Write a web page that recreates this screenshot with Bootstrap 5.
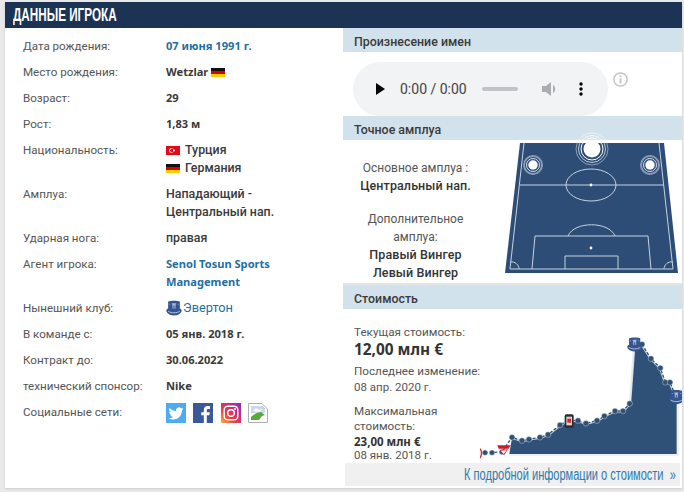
<!DOCTYPE html>
<html lang="ru">
<head>
<meta charset="utf-8">
<title>Данные игрока</title>
<link rel="stylesheet" href="https://cdn.jsdelivr.net/npm/bootstrap@5.3.0/dist/css/bootstrap.min.css">
<style>
html,body{height:100%;overflow:hidden}
body{background:#e9e9e9;font-family:Roboto,"Liberation Sans",sans-serif;font-size:12px;line-height:18px;color:#333}
.shell{position:relative;margin:2px 2px 0 5px;height:486px;background:#fff;box-shadow:0 1px 2px rgba(0,0,0,.12)}
.head-bar{height:26px;background:#1d3353;color:#fff;padding-left:8px;font:700 18px/26px "Liberation Sans",sans-serif}
.head-txt{display:inline-block;transform:scaleX(.65);transform-origin:left;white-space:nowrap}
.info-col{width:338px;flex:none;padding:9px 0 0 18px}
.side-col{width:339px;flex:none}
.info-row{display:flex;padding-bottom:8px}
.info-key{width:143px;flex:none;color:#555;font-size:11.6px}
.info-val{font-family:"Noto Sans",Roboto,sans-serif;font-weight:700;font-size:11.1px;color:#3a3a3a;width:170px}
.info-val a,.club-link{color:#1f6f9f;text-decoration:none}
.plain-line{font-family:Roboto,sans-serif;font-weight:500;font-size:12.4px}
.club-link{font-family:Roboto,sans-serif;font-weight:400;font-size:12.8px}
.crest-ico{flex:none;margin-right:1px}
.flag{display:inline-block;width:14px;height:9px;vertical-align:-1px}
.flag-gap{margin-right:5px}
.bar-title{background:#d2e2ec;height:24px;padding-left:11px;font-weight:500;font-size:12.4px;line-height:28px;color:#3b3b3b;overflow:hidden}
.player-wrap{height:64px;padding:10px 0 0 10px}
.fake-audio{width:255px;height:54px;border-radius:27px;background:#f1f3f4;padding-left:23px;color:#3f4246;font-size:14px}
.audio-time{width:66px;margin:0 16px 0 15px;white-space:nowrap}
.audio-track{width:36px;height:4px;border-radius:2px;background:#c0c3c7;margin-right:24px}
.menu-dots{margin-left:21px}
.info-dot{margin:10px 0 0 5px}
.pitch-area{height:143px}
.pitch-text{width:145px;padding-top:19px;text-align:center;color:#555;flex:none}
.pitch-gap{height:15px}
.strong-line{font-weight:500;font-size:12.5px;color:#333;letter-spacing:.1px}
.pitch-svg{overflow:visible;margin:3px 0 0 17px;display:block}
.sep-line{height:2px;background:#e4e4e4}
.value-area{height:154px;overflow:hidden}
.value-text{width:127px;flex:none;margin-left:11px;padding-top:14px;color:#555;white-space:nowrap;font-size:11.7px}
.wrap-txt{white-space:normal;line-height:15px;margin-top:9px}
.big-money{font-family:"Noto Sans",Roboto,sans-serif;font-weight:700;font-size:15.4px;color:#333;line-height:17px;margin-bottom:5px}
.last-line{line-height:17px}
.mid-money{font-family:"Noto Sans",Roboto,sans-serif;font-weight:700;font-size:11.5px;color:#333;line-height:15px}
.tiny-date{font-size:11.5px;line-height:15px;color:#555}
.end-date{line-height:13px}
.chart-svg{display:block;margin:21px 0 0 -1px;flex:none}
.more-bar{position:absolute;left:340px;bottom:2px;width:335px;height:23px;background:#f0f0f0;text-align:right;padding-right:4px;font:400 16px/23px "Liberation Sans",sans-serif;color:#2d7bab;white-space:nowrap;overflow:hidden}
.more-bar a{color:inherit;text-decoration:none;display:inline-block;transform:scaleX(.69);transform-origin:right}
.social-ico{width:20px;height:20px;display:block}
.gap-seven{margin-left:7px}
.gap-eight{margin-left:8px}
</style>
</head>
<body>
<svg width="0" height="0" class="d-block" aria-hidden="true"><defs>
<symbol id="crest" viewBox="0 0 30 30">
<path d="M4 3c4-2 18-2 22 0v13c3 1 4 3 3 6-2 4-8 7-14 7S3 26 1 22c-1-3 0-5 3-6z" fill="#34558f"/>
<path d="M11 6h8v2h-1v8h-6V8h-1z" fill="#a9b8d4"/>
<path d="M14 11h2v5h-2z" fill="#34558f"/>
<path d="M6 7h2v2H6zM22 7h2v2h-2z" fill="#8fa2c6"/>
<path d="M4 21c6 4 16 4 22 0" fill="none" stroke="#d5dded" stroke-width="1.500"/>
</symbol>
</defs></svg>
<div class="shell">
<div class="head-bar"><span class="head-txt">ДАННЫЕ ИГРОКА</span></div>
<div class="d-flex">
<div class="info-col">
 <div class="info-row"><div class="info-key">Дата рождения:</div><div class="info-val"><a href="#">07 июня 1991 г.</a></div></div>
 <div class="info-row"><div class="info-key">Место рождения:</div><div class="info-val">Wetzlar <svg class="flag" viewBox="0 0 14 9"><rect width="14" height="3" fill="#111"/><rect y="3" width="14" height="3" fill="#d00"/><rect y="6" width="14" height="3" fill="#fc0"/></svg></div></div>
 <div class="info-row"><div class="info-key">Возраст:</div><div class="info-val">29</div></div>
 <div class="info-row"><div class="info-key">Рост:</div><div class="info-val">1,83 м</div></div>
 <div class="info-row"><div class="info-key">Национальность:</div><div class="info-val plain-line">
  <div><svg class="flag flag-gap" viewBox="0 0 14 9"><rect width="14" height="9" fill="#e30a17"/><circle cx="5.3" cy="4.5" r="2.3" fill="#fff"/><circle cx="5.9" cy="4.5" r="1.8" fill="#e30a17"/><circle cx="8" cy="4.5" r=".9" fill="#fff"/></svg>Турция</div>
  <div><svg class="flag flag-gap" viewBox="0 0 14 9"><rect width="14" height="3" fill="#111"/><rect y="3" width="14" height="3" fill="#d00"/><rect y="6" width="14" height="3" fill="#fc0"/></svg>Германия</div>
 </div></div>
 <div class="info-row"><div class="info-key">Амплуа:</div><div class="info-val plain-line">Нападающий -<br>Центральный нап.</div></div>
 <div class="info-row"><div class="info-key">Ударная нога:</div><div class="info-val plain-line">правая</div></div>
 <div class="info-row"><div class="info-key">Агент игрока:</div><div class="info-val"><a href="#">Senol Tosun Sports<br>Management</a></div></div>
 <div class="info-row"><div class="info-key">Нынешний клуб:</div><div class="info-val d-flex align-items-center"><svg width="16" height="16" class="crest-ico"><use href="#crest"/></svg><a class="club-link" href="#">Эвертон</a></div></div>
 <div class="info-row"><div class="info-key">В команде с:</div><div class="info-val">05 янв. 2018 г.</div></div>
 <div class="info-row"><div class="info-key">Контракт до:</div><div class="info-val">30.06.2022</div></div>
 <div class="info-row"><div class="info-key">технический спонсор:</div><div class="info-val">Nike</div></div>
 <div class="info-row"><div class="info-key">Социальные сети:</div><div class="d-flex">
  <svg class="social-ico" viewBox="0 0 20 20"><rect width="20" height="20" fill="#4eabf0"/><path transform="translate(2.5 2.5) scale(.94)" fill="#fff" d="M5.026 15c6.038 0 9.341-5.003 9.341-9.334 0-.14 0-.282-.006-.422A6.685 6.685 0 0 0 16 3.542a6.658 6.658 0 0 1-1.889.518 3.301 3.301 0 0 0 1.447-1.817 6.533 6.533 0 0 1-2.087.793A3.286 3.286 0 0 0 7.875 6.03a9.325 9.325 0 0 1-6.767-3.429 3.289 3.289 0 0 0 1.018 4.382A3.323 3.323 0 0 1 .64 6.575v.045a3.288 3.288 0 0 0 2.632 3.218 3.203 3.203 0 0 1-.865.115 3.23 3.23 0 0 1-.614-.057 3.283 3.283 0 0 0 3.067 2.277A6.588 6.588 0 0 1 .78 13.58a6.32 6.32 0 0 1-.78-.045A9.344 9.344 0 0 0 5.026 15z"/></svg>
  <svg class="social-ico gap-seven" viewBox="0 0 20 20"><rect width="20" height="20" fill="#3b5998"/><path fill="#fff" d="M13.8 20v-7.7h2.6l.4-3h-3V7.4c0-.9.2-1.5 1.5-1.5H17V3.2c-.3 0-1.2-.1-2.3-.1-2.3 0-3.900 1.400-3.900 4v2.200H8.200v3h2.600V20z"/></svg>
  <svg class="social-ico gap-eight" viewBox="0 0 20 20"><defs><linearGradient id="ig" x1="0" y1="1" x2="1" y2="0"><stop offset="0" stop-color="#fdb13a"/><stop offset=".35" stop-color="#e8403f"/><stop offset=".7" stop-color="#c32c8c"/><stop offset="1" stop-color="#7a35b5"/></linearGradient></defs><rect width="20" height="20" fill="url(#ig)"/><rect x="3.2" y="3.2" width="13.6" height="13.6" rx="3.6" fill="none" stroke="#fff" stroke-width="1.4"/><circle cx="10" cy="10" r="3.3" fill="none" stroke="#fff" stroke-width="1.4"/><circle cx="14" cy="6" r=".9" fill="#fff"/></svg>
  <svg class="social-ico gap-seven" viewBox="0 0 20 20"><path d="M.5.5h13.500l5.500 5.500v13.500H.5z" fill="#fff" stroke="#b0b0b0"/><path d="M3 3h10.500v3.500H17V10H3z" fill="#c7d9f3"/><path d="M5 8l3-3 3 2 3-1-2 3z" fill="#fff"/><path d="M3 17v-3c3-3 7-5 10-5l4 3-3 1-3 4z" fill="#58a83b"/><path d="M14 3l3 3h-3z" fill="#ddd" stroke="#b0b0b0" stroke-width=".6"/></svg>
 </div></div>
</div>
<div class="side-col">
 <div class="bar-title">Произнесение имен</div>
 <div class="player-wrap d-flex align-items-start">
  <div class="fake-audio d-flex align-items-center">
   <svg width="9" height="12" viewBox="0 0 9 12"><path d="M0 0l9 6-9 6z" fill="#000"/></svg>
   <span class="audio-time">0:00 / 0:00</span>
   <span class="audio-track"></span>
   <svg width="16" height="14" viewBox="0 0 16 14"><path d="M0 4h4l5-4v14L4 10H0z" fill="#a9acb0"/><path d="M11 3c3 2 3 6 0 8z" fill="#a9acb0"/></svg>
   <svg class="menu-dots" width="4" height="14" viewBox="0 0 4 14"><circle cx="2" cy="2" r="1.7"/><circle cx="2" cy="7" r="1.7"/><circle cx="2" cy="12" r="1.7"/></svg>
  </div>
  <svg class="info-dot" width="15" height="15" viewBox="0 0 15 15"><circle cx="7.5" cy="7.5" r="6.6" fill="none" stroke="#c4c4c4" stroke-width="1.5"/><rect x="6.6" y="6.4" width="1.8" height="5" fill="#c4c4c4"/><rect x="6.6" y="3.4" width="1.8" height="1.8" fill="#c4c4c4"/></svg>
 </div>
 <div class="bar-title">Точное амплуа</div>
 <div class="pitch-area d-flex">
  <div class="pitch-text">
   <div>Основное амплуа :</div><div class="strong-line">Центральный нап.</div>
   <div class="pitch-gap"></div>
   <div class="px-3">Дополнительное амплуа:</div><div class="strong-line">Правый Вингер</div><div class="strong-line">Левый Вингер</div>
  </div>
  <svg class="pitch-svg" width="173" height="130" viewBox="505 143 173 130">
   <path d="M520 143H664L678 273H505z" fill="#2d4d77"/>
   <g fill="none" stroke="#c6d2e0" stroke-width="1">
    <path d="M524 143L510 269H673L659 143"/>
    <path d="M520 185H664"/>
    <ellipse cx="591" cy="185" rx="25" ry="16"/>
    <path d="M532 269L535 236H648L651 269"/>
    <path d="M565 269V256H618V269"/>
    <path d="M568 236C574 221 609 221 615 236"/>
    <path d="M510 262C515 261 519 265 519 269M673 262C668 261 664 265 664 269"/>
   </g>
   <circle cx="591" cy="185" r="1.4" fill="#fff"/><circle cx="591" cy="248" r="1.4" fill="#fff"/>
   <g fill="none" stroke="#fff">
    <circle cx="592" cy="149" r="16" stroke-opacity=".45"/><circle cx="592" cy="149" r="13.5" stroke-opacity=".7"/><circle cx="592" cy="149" r="11"/>
    <circle cx="533" cy="165" r="9" stroke-opacity=".45" stroke-width="2"/><circle cx="533" cy="165" r="6.5" stroke-opacity=".8"/>
    <circle cx="650" cy="165" r="9" stroke-opacity=".45" stroke-width="2"/><circle cx="650" cy="165" r="6.5" stroke-opacity=".8"/>
   </g>
   <circle cx="592" cy="149" r="8.500" fill="#fff"/><circle cx="533" cy="165" r="4.700" fill="#fff"/><circle cx="650" cy="165" r="4.700" fill="#fff"/>
  </svg>
 </div>
 <div class="sep-line"></div>
 <div class="bar-title">Стоимость</div>
 <div class="value-area d-flex">
  <div class="value-text">
   <div>Текущая стоимость:</div>
   <div class="big-money">12,00 млн €</div>
   <div class="last-line">Последнее изменение:</div>
   <div class="tiny-date">08 апр. 2020 г.</div>
   <div class="wrap-txt">Максимальная стоимость:</div>
   <div class="mid-money">23,00 млн €</div>
   <div class="tiny-date end-date">08 янв. 2018 г.</div>
  </div>
  <svg class="chart-svg" width="204" height="130" viewBox="0 0 612 390">
   <path d="M88 372L96 322L126 332L147 328L180 322L204 314L240 285L267 270L294 272L318 280L351 272L373 258L405 243L429 243L449 221L462 45L486 43L513 86L541 114L556 157L570 157L590 200V372z" fill="#2f5178"/>
   <path d="M88 375H594V200" fill="none" stroke="#e0e0e0" stroke-width="3"/>
   <path d="M15 368L66 366L96 322L126 332L147 328L180 322L204 314L240 285L267 270L294 272L318 280L351 272L373 258L405 243L429 243L449 221L462 45L486 43L513 86L541 114L556 157L570 157L588 200" fill="none" stroke="#fff" stroke-width="9" opacity=".75"/>
   <path d="M15 368L66 366L96 322L126 332L147 328L180 322L204 314L240 285L267 270L294 272L318 280L351 272L373 258L405 243L429 243L449 221M486 43L513 86L541 114L556 157L570 157L588 200" fill="none" stroke="#2f5178" stroke-width="4" stroke-dasharray="9 5"/>
   <path d="M462 45L449 221" stroke="#e6ebf2" stroke-width="5"/>
   <g fill="#2f5178" stroke="#fff" stroke-width="1">
    <circle cx="15" cy="368" r="8"/><circle cx="36" cy="368" r="8"/><circle cx="66" cy="366" r="8"/><circle cx="96" cy="322" r="8.500"/><circle cx="126" cy="332" r="8.500"/><circle cx="147" cy="328" r="8.500"/><circle cx="180" cy="322" r="8.500"/><circle cx="204" cy="314" r="8.500"/><circle cx="240" cy="285" r="8.500"/><circle cx="294" cy="272" r="8.500"/><circle cx="318" cy="280" r="8.500"/><circle cx="351" cy="272" r="8.500"/><circle cx="373" cy="258" r="8.500"/><circle cx="405" cy="243" r="8.500"/><circle cx="429" cy="243" r="8.500"/><circle cx="449" cy="221" r="8.500"/><circle cx="486" cy="43" r="8.500"/><circle cx="513" cy="86" r="8.500"/><circle cx="541" cy="114" r="8.500"/><circle cx="556" cy="157" r="8.500"/><circle cx="570" cy="157" r="8.500"/>
   </g>
   <path d="M0 356C6 362 6 376 0 384" fill="none" stroke="#d8222a" stroke-width="4"/>
   <path d="M52 346H92L86 356H56zM60 360L84 358L72 376z" fill="#c71f2a"/><path d="M62 362L80 361L71 372z" fill="#fff"/>
   <rect x="254" y="253" width="27" height="40" rx="5" fill="#2b2b2b"/><rect x="259" y="260" width="17" height="26" fill="#d9d9d9"/><rect x="262" y="266" width="11" height="12" fill="#e21f26"/>
   <use href="#crest" x="441" y="20" width="46" height="46"/>
   <use href="#crest" x="566" y="178" width="46" height="46"/>
  </svg>
 </div>
</div>
</div>
<div class="more-bar"><a href="#">К подробной информации о стоимости &nbsp;»</a></div>
</div>
</body>
</html>
